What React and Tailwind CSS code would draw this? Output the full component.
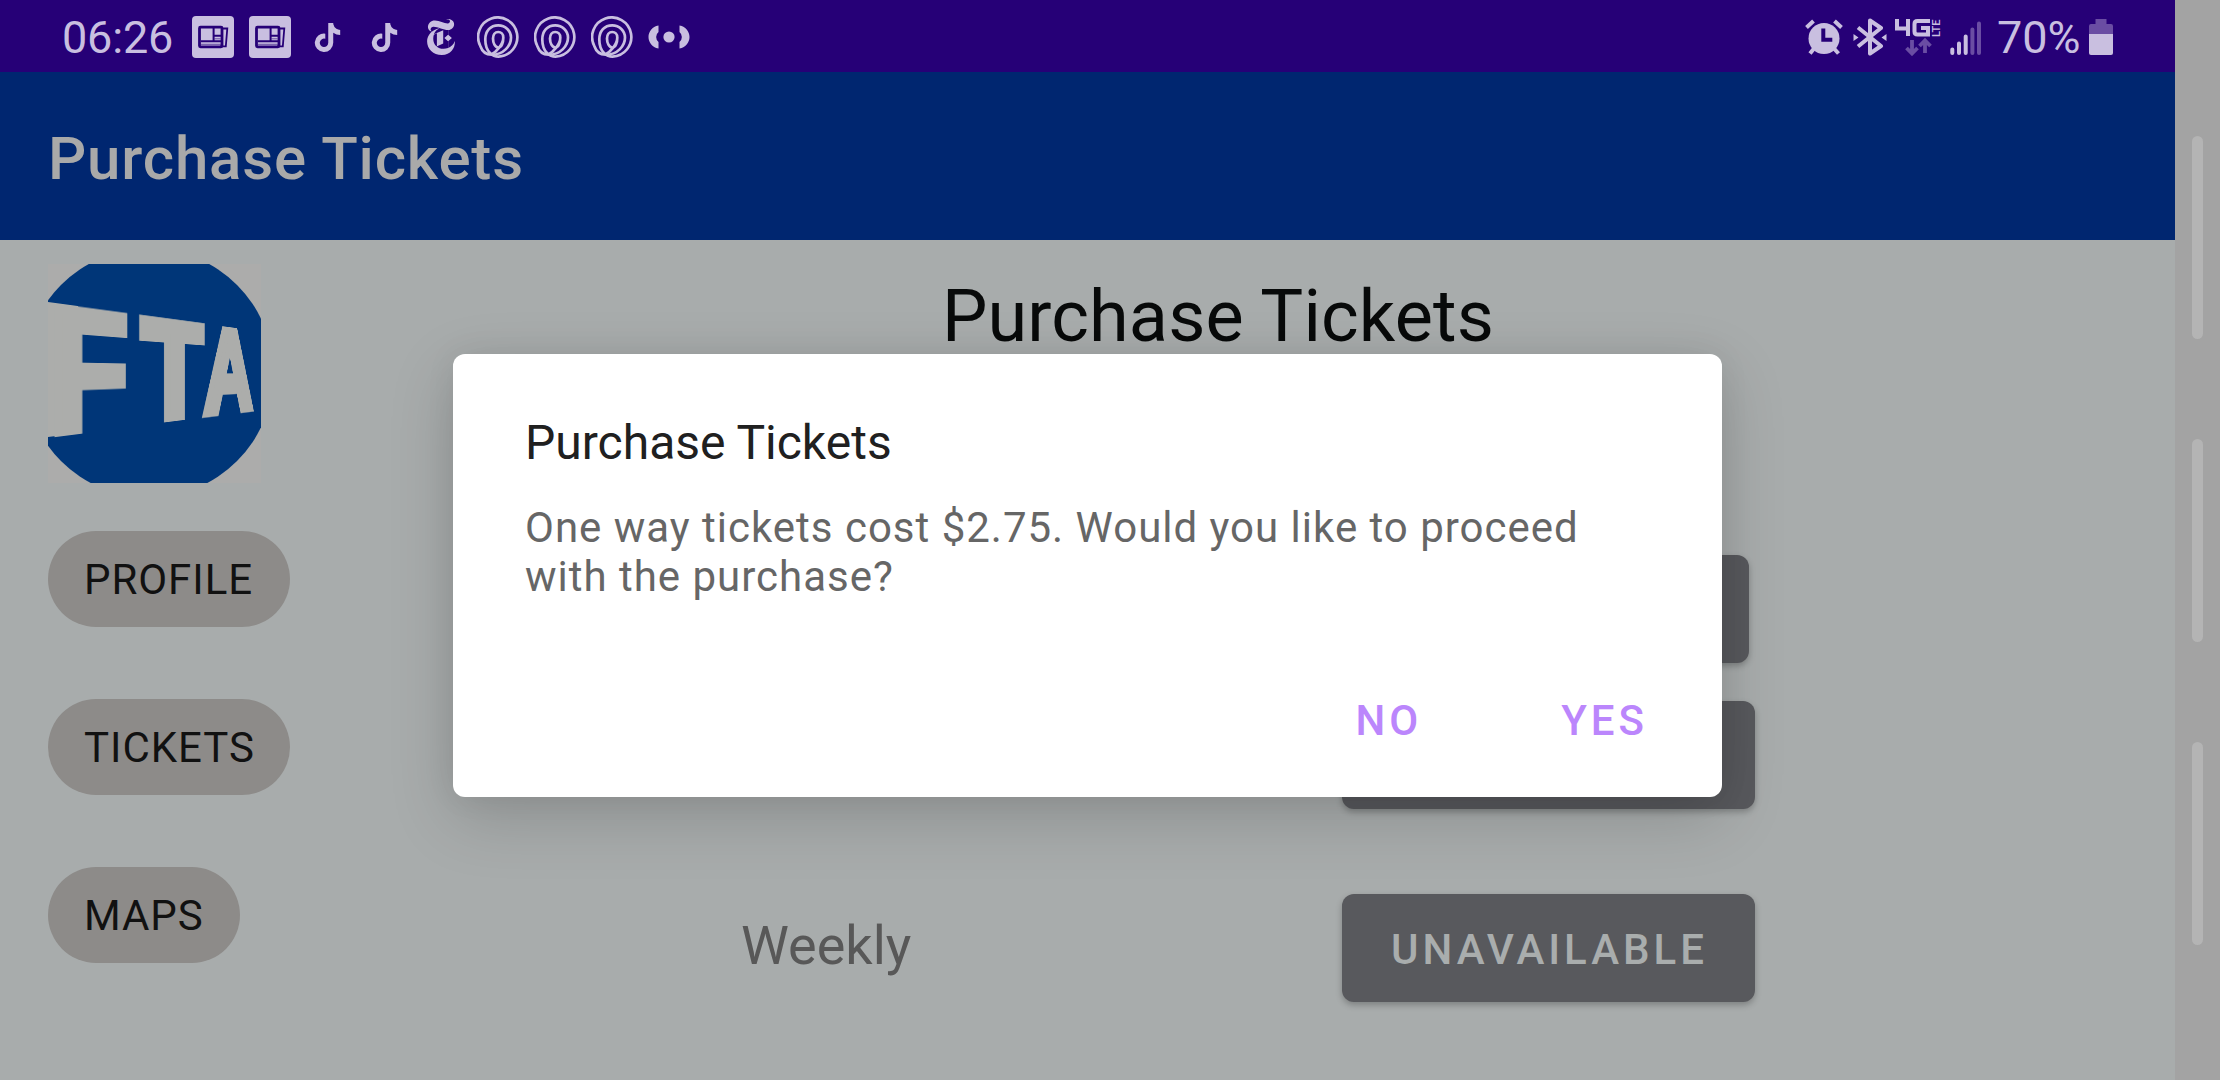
import React from "react";
import { FaTiktok } from "react-icons/fa6";
import { SiNewyorktimes } from "react-icons/si";

const NewsIcon = () => (
  <svg viewBox="0 0 42 42" className="h-[42px] w-[42px] shrink-0">
    <rect width="42" height="42" rx="4" fill="#c9bfe0" />
    <g fill="none" stroke="#260077" strokeWidth="2.8">
      <rect x="7.5" y="11.2" width="22.500" height="19.6" rx="1" />
      <path d="M31 12.5h4.300l-1.5 17.800H28" strokeWidth="1.800" />
      <path d="M21.6 12v14M9 25.2h20M22 19.700h7" strokeWidth="2" />
      <path d="M22.5 22.8h6M9 28.300h20" strokeWidth="0.6" />
    </g>
  </svg>
);

const SpiralIcon = () => (
  <svg viewBox="0 0 42 42" className="h-[42px] w-[42px] shrink-0" fill="none" stroke="#c9bfe0" strokeWidth="2.7">
    <path d="M3.300 30A19.600 19.600 0 1 1 21.500 40.600C18 40.600 15.500 39.500 13 37C9.500 33.500 8.300 28 8.300 23.500C8.300 15 13.500 9.300 21.200 9.300C28.500 9.300 34 15 34 21.500C34 29.500 27 38.700 14.500 38.700C9 38.700 5 35 3.300 30" />
    <path d="M14 38.700C20 35.500 26.300 28 26.300 21.500C26.300 18 24 16 21.300 16C18 16 16 19 16 22.500C16 27 18 31.500 21.500 31.500C24.500 31.500 26.300 27 26.300 21.500" />
  </svg>
);

const BroadcastIcon = () => (
  <svg viewBox="0 0 42 24" className="h-6 w-[42px] shrink-0">
    <circle cx="21" cy="12" r="5.600" fill="#c9bfe0" />
    <path d="M10.500 0.500v6.500a6.500 6.500 0 0 0 0 10v6.500C4 22.500 0.500 17 0.500 12S4 1.500 10.500 0.500zM31.500 0.500v6.500a6.500 6.500 0 0 1 0 10v6.500C38 22.500 41.500 17 41.500 12S38 1.500 31.500 0.500z" fill="#c9bfe0" />
  </svg>
);

const AlarmIcon = () => (
  <svg viewBox="0 0 38 36" className="h-9 w-[38px] shrink-0">
    <g stroke="#c9bfe0" strokeWidth="4">
      <path d="M1.500 8.500L8.500 2M36.500 8.500L29.500 2M9 29.500L5 34.500M29 29.500L33.500 34.500" />
    </g>
    <circle cx="19" cy="19.500" r="15.500" fill="#c9bfe0" />
    <path d="M18.300 9.500v11.200h9" fill="none" stroke="#260077" strokeWidth="4" />
  </svg>
);

const BluetoothIcon = () => (
  <svg viewBox="0 0 34 38" className="h-[38px] w-[34px] shrink-0">
    <path d="M5 9.500L28 28L17 35.500V2.500L28 10L5 28.500" fill="none" stroke="#c9bfe0" strokeWidth="4" strokeLinejoin="round" />
    <path d="M0.500 16l5 3.500l-5 3.500zM33.500 16l-5 3.500l5 3.500z" fill="#c9bfe0" />
  </svg>
);

const NetworkIcon = () => (
  <div className="relative h-[38px] w-[45px] shrink-0">
    <svg viewBox="0 0 45 38" className="block h-[38px] w-[45px]">
      <g fill="none" stroke="#c9bfe0" strokeWidth="4">
        <path d="M2 1v9.500h13M13 1v17" />
        <path d="M35 3H22.500q-3 0-3 3v7.500q0 3 3 3H33V10h-7" />
      </g>
      <g fill="none" stroke="#6a4da3" strokeWidth="3.800">
        <path d="M17 22v13M11.500 30l5.500 5.500l5.500-5.500" />
        <path d="M30 35V22M24.500 28l5.500-5.500l5.500 5.500" />
      </g>
    </svg>
    <span className="absolute left-[37px] top-[19px] origin-top-left -rotate-90 text-[11px] font-medium leading-[9px] text-[#c9bfe0]">LTE</span>
  </div>
);

const SignalIcon = () => (
  <svg viewBox="0 0 32 34" className="h-[34px] w-8 shrink-0" strokeWidth="4" strokeLinecap="round">
    <g stroke="#c9bfe0">
      <path d="M2.300 28.500v3.500M9 22.500v9.500M15.700 15.500v16.500" />
    </g>
    <g stroke="#6a4da3">
      <path d="M22.400 8.500v23.500M29 2.500v29.500" />
    </g>
  </svg>
);

const BatteryIcon = () => (
  <svg viewBox="0 0 24 36" className="h-9 w-6 shrink-0">
    <path d="M6.500 0h11v5H22a2 2 0 0 1 2 2v8H0V7a2 2 0 0 1 2-2h4.500z" fill="#6a4da3" />
    <path d="M0 15h24v19a2 2 0 0 1-2 2H2a2 2 0 0 1-2-2z" fill="#c9bfe0" />
  </svg>
);

const Logo = () => (
  <div className="relative h-[219px] w-[213px] shrink-0 overflow-hidden bg-[#acacab]">
    <svg viewBox="0 0 213 219" className="block h-[219px] w-[213px]">
      <circle cx="101" cy="109" r="124.500" fill="#003678" />
    </svg>
    <svg
      viewBox="0 0 400 219"
      className="absolute left-0 top-0 h-[219px] w-[400px] origin-[0px_108px] [transform:matrix3d(1,0,0,0.001927,0,1,0,0,0,0,1,0,0,0,0,1)]"
    >
      <rect x="-4" y="38" width="36" height="135" fill="#acadab" />
      <g fill="#acadab" stroke="#acadab" fontFamily="Liberation Sans" fontWeight="700">
        <text transform="translate(0 168.500) scale(.853 1)" fontSize="183" strokeWidth="9">F</text>
        <text transform="translate(114.400 167) scale(.97 1)" fontSize="179" strokeWidth="12">T</text>
        <text transform="translate(223 166.500) scale(.894 1)" fontSize="177" strokeWidth="13">A</text>
      </g>
    </svg>
  </div>
);

const Chip = ({ className = "", children }) => (
  <button className={`flex h-24 items-center whitespace-nowrap rounded-full bg-[#8d8b89] pl-9 pt-px text-[42px] leading-none tracking-[0.95px] text-[#111] ${className}`}>
    {children}
  </button>
);

const PassButton = ({ className, children }) => (
  <button
    className={`flex h-[108px] items-center justify-center rounded-xl bg-[#58595d] pl-[2px] pt-[4px] text-[42px] font-medium leading-none tracking-[4px] text-[#a9adad] shadow-[0_3px_6px_rgba(0,0,0,0.25)] ${className}`}
  >
    {children}
  </button>
);

export default function App() {
  return (
    <div className="relative flex h-[1080px] w-[2220px] overflow-hidden bg-[#a8acac] font-['Roboto',sans-serif]">
      <div className="flex w-[2175px] shrink-0 flex-col">
        <header className="flex h-[72px] shrink-0 items-center justify-between bg-[#260077] pl-[62px] pr-[62px] text-[45px] leading-none text-[#c9bfe0]">
          <div className="flex items-center pt-[2px]">
            <span className="w-[130px] pt-px tracking-[-0.2px]">06:26</span>
            <div className="flex items-center gap-[15px]">
              <NewsIcon />
              <NewsIcon />
              <div className="flex w-[42px] justify-center pl-px"><FaTiktok className="h-[29px] w-[29px]" /></div>
              <div className="flex w-[42px] justify-center pl-px"><FaTiktok className="h-[29px] w-[29px]" /></div>
              <div className="flex w-[42px] justify-center"><SiNewyorktimes className="h-9 w-9" /></div>
              <SpiralIcon />
              <SpiralIcon />
              <SpiralIcon />
              <BroadcastIcon />
            </div>
          </div>
          <div className="flex items-center pt-[2px]">
            <AlarmIcon />
            <div className="ml-[10px]"><BluetoothIcon /></div>
            <div className="ml-2"><NetworkIcon /></div>
            <div className="ml-[10px] pt-[2px]"><SignalIcon /></div>
            <span className="ml-[15px] w-[92px] pt-px">70%</span>
            <BatteryIcon />
          </div>
        </header>
        <div className="flex h-[168px] shrink-0 items-center bg-[#002670] px-12 pt-[6px]">
          <h1 className="text-[60px] font-medium leading-none tracking-[0.82px] text-[#a9a9a9]">Purchase Tickets</h1>
        </div>
        <div className="flex flex-1 pl-12 pt-6">
          <aside className="flex w-[242px] shrink-0 flex-col items-start">
            <Logo />
            <nav className="mt-12 flex flex-col items-start gap-[72px]">
              <Chip className="w-[242px]">PROFILE</Chip>
              <Chip className="w-[242px]">TICKETS</Chip>
              <Chip className="w-48">MAPS</Chip>
            </nav>
          </aside>
          <main className="flex flex-1 flex-col pl-[451px]">
            <h2 className="ml-[201px] mt-[11px] h-[84px] text-[72px] leading-[84px] tracking-[0.13px] text-[#080a0a]">Purchase Tickets</h2>
            <div className="mt-[196px] flex flex-col">
              <div className="flex items-center pl-[601px]">
                <PassButton className="w-[407px]" />
              </div>
              <div className="mt-[38px] flex items-center pl-[601px]">
                <PassButton className="w-[413px]" />
              </div>
              <div className="mt-[85px] flex items-center text-[54px] text-[#585858]">
                <span className="w-[601px] pb-[6px]">Weekly</span>
                <PassButton className="w-[413px]">UNAVAILABLE</PassButton>
              </div>
            </div>
          </main>
        </div>
      </div>
      <div className="flex w-[45px] flex-col items-center gap-[100px] bg-[#a3a3a3] pt-[136px]">
        <div className="h-[203px] w-[11px] rounded-full bg-[#b4b4b4]" />
        <div className="h-[203px] w-[11px] rounded-full bg-[#b4b4b4]" />
        <div className="h-[203px] w-[11px] rounded-full bg-[#b4b4b4]" />
      </div>

      <section
        role="dialog"
        className="absolute left-[453px] top-[354px] flex h-[443px] w-[1269px] flex-col rounded-xl bg-white px-[72px] shadow-[0_20px_64px_rgba(0,0,0,0.17),0_0_32px_rgba(0,0,0,0.06)]"
      >
        <h3 className="mt-[61px] text-[48px] leading-[56px] text-[#202020]">Purchase Tickets</h3>
        <p className="mt-[32px] text-[42px] leading-[49px] tracking-[0.99px] text-[#666]">
          One way tickets cost $2.75. Would you like to proceed
          <br />
          with the purchase?
        </p>
        <div className="mt-[95px] flex justify-end gap-[139px] pr-[2px] text-[42px] font-medium leading-[49px] tracking-[4px] text-[#bb86fc]">
          <button>NO</button>
          <button>YES</button>
        </div>
      </section>
    </div>
  );
}
